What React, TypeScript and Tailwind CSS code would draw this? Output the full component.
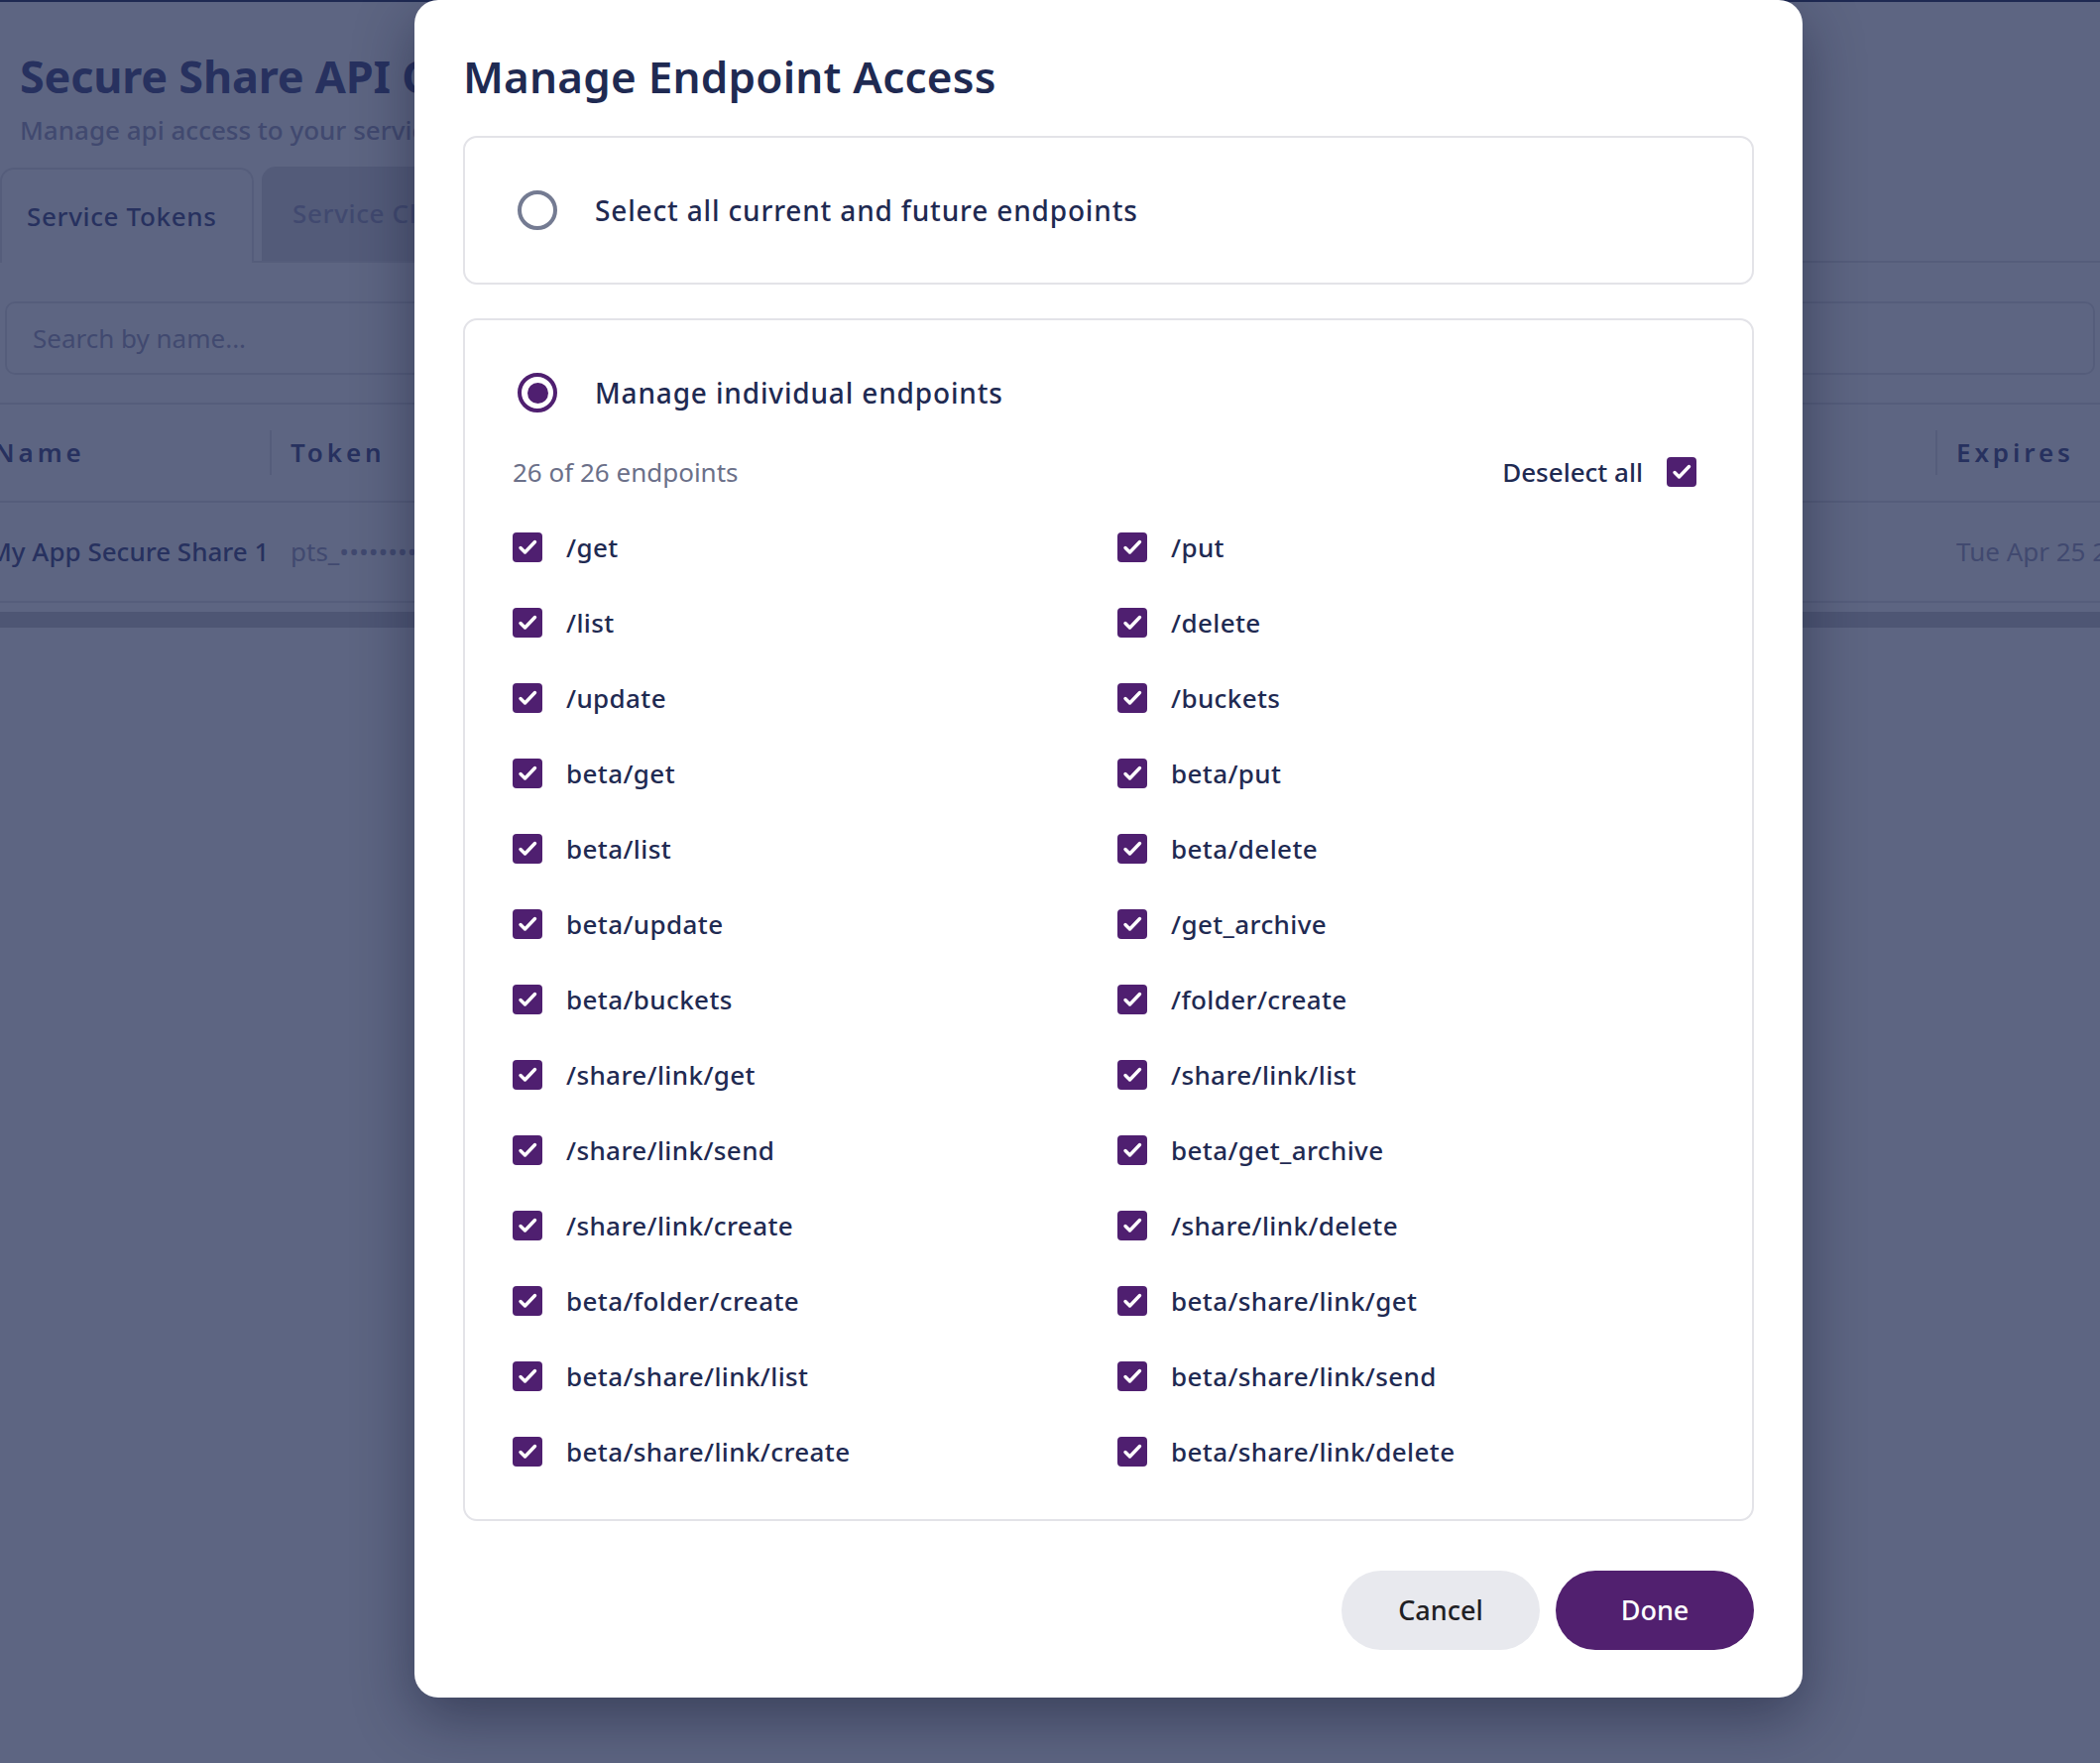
import { useState } from "react";

const LEFT = [
  "/get",
  "/list",
  "/update",
  "beta/get",
  "beta/list",
  "beta/update",
  "beta/buckets",
  "/share/link/get",
  "/share/link/send",
  "/share/link/create",
  "beta/folder/create",
  "beta/share/link/list",
  "beta/share/link/create",
];

const RIGHT = [
  "/put",
  "/delete",
  "/buckets",
  "beta/put",
  "beta/delete",
  "/get_archive",
  "/folder/create",
  "/share/link/list",
  "beta/get_archive",
  "/share/link/delete",
  "beta/share/link/get",
  "beta/share/link/send",
  "beta/share/link/delete",
];

const ALL = [...LEFT, ...RIGHT];

function Checkbox({ checked, onClick }: { checked: boolean; onClick?: () => void }) {
  return (
    <button
      type="button"
      onClick={onClick}
      className={`flex h-[30px] w-[30px] shrink-0 items-center justify-center rounded-[4px] ${
        checked ? "bg-[#4f1f70]" : "border-2 border-[#9aa0b4] bg-white"
      }`}
    >
      {checked && (
        <svg width="30" height="30" viewBox="0 0 30 30" fill="none">
          <path d="M8 15.5l4.5 4.5L22.5 9.5" stroke="white" strokeWidth="3.4" strokeLinecap="round" strokeLinejoin="round" />
        </svg>
      )}
    </button>
  );
}

function Radio({ on }: { on: boolean }) {
  return (
    <span
      className={`flex h-[40px] w-[40px] shrink-0 items-center justify-center rounded-full border-4 ${
        on ? "border-[#4f1f70]" : "border-[#747b92]"
      }`}
    >
      {on && <span className="h-[21px] w-[21px] rounded-full bg-[#4f1f70]" />}
    </span>
  );
}

export default function App() {
  const [mode, setMode] = useState<"all" | "some">("some");
  const [sel, setSel] = useState<Set<string>>(new Set(ALL));

  const toggle = (e: string) =>
    setSel((s) => {
      const n = new Set(s);
      if (n.has(e)) n.delete(e);
      else n.add(e);
      return n;
    });

  const allOn = sel.size === ALL.length;

  return (
    <div
      className="relative h-[1778px] w-full overflow-hidden bg-white text-[#1f2a52]"
      style={{ fontFamily: '"Noto Sans", "Open Sans", sans-serif' }}
    >
      {/* page behind the dialog */}
      <div className="h-[2px] bg-[#1e2a52]" />
      <div className="pl-[20px] pt-[47px]">
        <h1 className="h-[56px] whitespace-nowrap text-[45px] font-bold leading-[56px] tracking-[-0.005em] text-[#3d4680]">
          Secure Share API Console
        </h1>
        <p className="mt-[8px] h-[36px] whitespace-nowrap text-[26px] font-medium leading-[36px] text-[#9a9cbc]">
          Manage api access to your services
        </p>
      </div>

      <div className="mt-[20px] flex h-[96px] items-end">
        <div className="flex h-[96px] w-[256px] shrink-0 items-center rounded-t-[14px] border-2 border-b-0 border-[#e2e2e6] bg-white pl-[25px] text-[26px] font-medium tracking-wide text-[#3d4680]">
          Service Tokens
        </div>
        <div className="flex h-[96px] flex-1 items-end gap-[8px] border-b-2 border-[#e2e2e6] pl-[8px]">
          <div className="flex h-[95px] w-[320px] items-center rounded-t-[14px] bg-[#d9d9de] pl-[31px] text-[26px] font-medium tracking-wide text-[#9a9cbc]">
            Service Clients
          </div>
        </div>
      </div>

      <div className="mx-[5px] mt-[39px] flex h-[74px] items-center rounded-[10px] border-2 border-[#e2e2e6] pl-[26px] text-[26px] text-[#9a9cbc]">
        Search by name...
      </div>

      <div className="mt-[28px] -ml-[30px] w-[2400px]">
        <div className="flex h-[101px] items-center border-y-2 border-[#e2e2e6] text-[26px] font-semibold tracking-[0.15em] text-[#3d4680]">
          <div className="w-[302px] shrink-0 pl-[24px]">Name</div>
          {["Token", "Endpoints", "Created", "Expires"].map((h, i) => (
            <div key={h} className={`flex shrink-0 items-center ${i === 3 ? "w-[400px]" : "w-[560px]"}`}>
              <span className="h-[45px] w-[2px] bg-[#e2e2e6]" />
              <span className="pl-[19px]">{h}</span>
            </div>
          ))}
        </div>
        <div className="flex h-[101px] items-center whitespace-nowrap border-b-2 border-[#e2e2e6] text-[26px]">
          <div className="w-[302px] shrink-0 pl-[18px] font-medium text-[#3d4680]">My App Secure Share 1</div>
          <div className="w-[560px] shrink-0 pl-[21px] text-[#9a9cbc]">pts_•••••••••••••</div>
          <div className="w-[560px] shrink-0 pl-[21px] text-[#9a9cbc]">26</div>
          <div className="w-[560px] shrink-0 pl-[21px] text-[#9a9cbc]">Mon Apr 24 2023</div>
          <div className="w-[400px] shrink-0 pl-[21px] text-[#9a9cbc]">Tue Apr 25 2024</div>
        </div>
      </div>
      <div className="mt-[9px] h-[16px] bg-[#c8c8cc]" />

      {/* overlay */}
      <div className="absolute inset-0 bg-[#1e2a52b8]" />

      {/* dialog */}
      <div className="absolute left-[418px] top-0 h-[1712px] w-[1400px] rounded-[24px] bg-white px-[49px] pt-[51px] shadow-[0_20px_60px_rgba(15,20,45,0.45)]">
        <h2 className="h-[52px] text-[44px] font-semibold leading-[52px] tracking-[0.005em] text-[#1f2a52]">
          Manage Endpoint Access
        </h2>

        <button
          type="button"
          onClick={() => setMode("all")}
          className="mt-[34px] flex h-[150px] w-full items-center gap-[38px] rounded-[14px] border-2 border-[#e3e3e8] px-[53px] text-left"
        >
          <Radio on={mode === "all"} />
          <span className="text-[28px] font-medium tracking-[0.03em]">Select all current and future endpoints</span>
        </button>

        <div className="mt-[34px] h-[1213px] rounded-[14px] border-2 border-[#e3e3e8] px-[48px] pt-[53px]">
          <button type="button" onClick={() => setMode("some")} className="ml-[5px] flex h-[40px] items-center gap-[38px] text-left">
            <Radio on={mode === "some"} />
            <span className="text-[28px] font-medium tracking-[0.03em]">Manage individual endpoints</span>
          </button>

          <div className="mt-[45px] flex h-[30px] items-center justify-between pr-[8px]">
            <span className="text-[26px] text-[#6b7089]">
              {sel.size} of {ALL.length} endpoints
            </span>
            <div className="flex items-center gap-[24px]">
              <span className="text-[26px] font-medium">{allOn ? "Deselect all" : "Select all"}</span>
              <Checkbox checked={allOn} onClick={() => setSel(allOn ? new Set() : new Set(ALL))} />
            </div>
          </div>

          <div className="mt-[23px] grid grid-cols-[610px_1fr]">
            {LEFT.map((l, i) =>
              [l, RIGHT[i]].map((e) => (
                <div key={e} className="flex h-[76px] items-center gap-[24px]">
                  <Checkbox checked={sel.has(e)} onClick={() => toggle(e)} />
                  <span className="text-[26px] font-medium tracking-[0.015em]">{e}</span>
                </div>
              )),
            )}
          </div>
        </div>

        <div className="mt-[50px] flex justify-end gap-[16px]">
          <button type="button" className="h-[80px] w-[200px] rounded-full bg-[#e8e9ee] text-[27px] font-medium text-[#1f2024]">
            Cancel
          </button>
          <button type="button" className="h-[80px] w-[200px] rounded-full bg-[#51206f] text-[27px] font-medium text-white">
            Done
          </button>
        </div>
      </div>
    </div>
  );
}
